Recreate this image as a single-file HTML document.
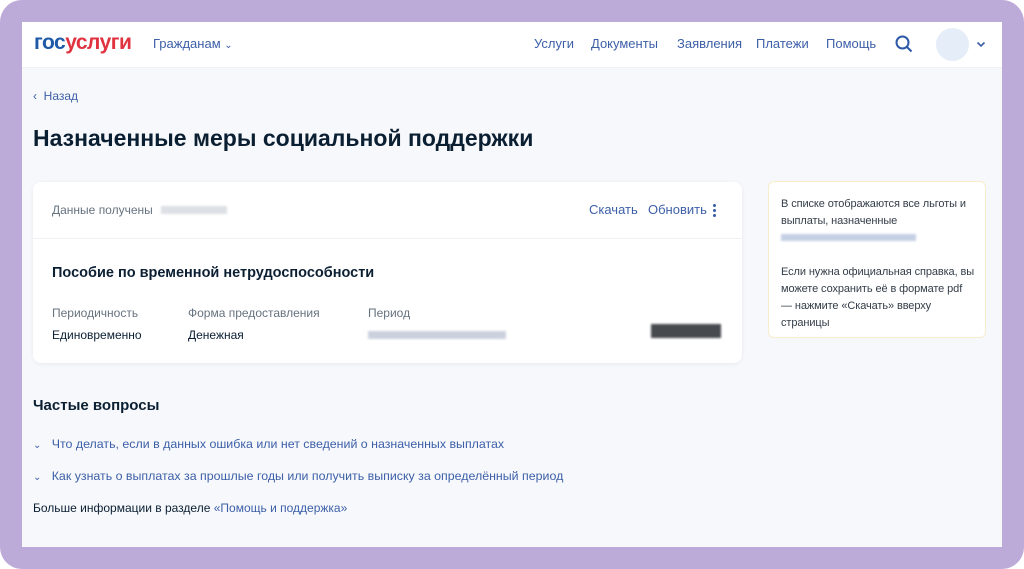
<!DOCTYPE html>
<html><head><meta charset="utf-8"><style>
*{margin:0;padding:0;box-sizing:border-box}
body{width:1024px;height:569px;background:#fff;font-family:"Liberation Sans",sans-serif;position:relative;overflow:hidden}
.frame{position:absolute;left:0;top:0;width:1024px;height:569px;background:#bcaad9;border-radius:22px}
.win{position:absolute;left:22px;top:22px;width:980px;height:525px;background:#f6f8fb;overflow:hidden}
.hdr{height:46px;background:#fff;position:relative;border-bottom:1px solid #eef1f5}
.a{position:absolute;color:#3d5fa8;font-size:13px}
.logo{position:absolute;left:12px;top:9px;font-size:21px;font-weight:bold;letter-spacing:-0.5px}
.card{position:absolute;left:11px;top:160px;width:709px;height:181px;background:#fff;border-radius:8px;box-shadow:0 1px 4px rgba(0,0,0,.06)}
.t{position:absolute;font-size:13px}
.g{color:#66727f}
.k{color:#0b1f33}
.blur{position:absolute;background:#c8ccd6;filter:blur(1px);opacity:.6}
.info{position:absolute;left:746px;top:159px;width:218px;height:157px;background:#fff;border:1px solid #f7eccb;border-radius:6px;padding:14px 12px;font-size:11px;line-height:17px;color:#333d48;white-space:nowrap;letter-spacing:-0.1px}
</style></head><body>
<div class="frame"></div>
<div class="win">
 <div class="hdr">
  <div class="logo"><span style="color:#1e5aa8">гос</span><span style="color:#e0323f">услуги</span></div>
  <div class="a" style="left:131px;top:14px">Гражданам <span style="font-size:10px">&#8964;</span></div>
  <div class="a" style="left:512px;top:14px">Услуги</div>
  <div class="a" style="left:569px;top:14px">Документы</div>
  <div class="a" style="left:655px;top:14px">Заявления</div>
  <div class="a" style="left:734px;top:14px">Платежи</div>
  <div class="a" style="left:804px;top:14px">Помощь</div>
  <svg style="position:absolute;left:873px;top:13px" width="18" height="18" viewBox="0 0 18 18"><circle cx="7.5" cy="7.5" r="6" fill="none" stroke="#2d58a7" stroke-width="2"/><path d="M12 12l4.5 4.5" stroke="#2d58a7" stroke-width="2"/></svg>
  <div style="position:absolute;left:914px;top:6px;width:33px;height:33px;border-radius:50%;background:#e5edf9"></div>
  <svg style="position:absolute;left:954px;top:19px" width="10" height="7" viewBox="0 0 10 7"><path d="M1.5 1.5l3.5 3.5 3.5-3.5" fill="none" stroke="#3d5fa8" stroke-width="1.6"/></svg>
 </div>
 <div class="a" style="left:11px;top:67px;font-size:12px">‹&nbsp; Назад</div>
 <div class="t k" style="left:11px;top:103px;font-size:23px;font-weight:bold">Назначенные меры социальной поддержки</div>
 <div class="card">
  <div class="t g" style="left:19px;top:21px;font-size:12px">Данные получены</div>
  <div class="blur" style="left:128px;top:24px;width:66px;height:8px"></div>
  <div class="a" style="left:556px;top:20px">Скачать</div>
  <div class="a" style="left:615px;top:20px">Обновить</div>
  <div style="position:absolute;left:680px;top:21px;width:3px;height:14px;background:radial-gradient(circle,#3d5fa8 1.4px,transparent 1.6px) 0 0/3px 5px"></div>
  <div style="position:absolute;left:0;top:56px;width:100%;height:1px;background:#eef0f4"></div>
  <div class="t k" style="left:19px;top:83px;font-size:14.5px;font-weight:bold">Пособие по временной нетрудоспособности</div>
  <div class="t g" style="left:19px;top:124px;font-size:12px">Периодичность</div>
  <div class="t g" style="left:155px;top:124px;font-size:12px">Форма предоставления</div>
  <div class="t g" style="left:335px;top:124px;font-size:12px">Период</div>
  <div class="t k" style="left:19px;top:146px;font-size:12px">Единовременно</div>
  <div class="t k" style="left:155px;top:146px;font-size:12px">Денежная</div>
  <div class="blur" style="left:335px;top:149px;width:138px;height:8px;background:#aab2c8"></div>
  <div class="blur" style="left:618px;top:142px;width:70px;height:14px;background:#1a1d24;opacity:.8"></div>
 </div>
 <div class="info">В списке отображаются все льготы и<br>выплаты, назначенные<br><span style="display:inline-block;width:135px;height:7px;background:#c6d0e4;filter:blur(1px)"></span><br><br>Если нужна официальная справка, вы<br>можете сохранить её в формате pdf<br>— нажмите «Скачать» вверху<br>страницы</div>
 <div class="t k" style="left:11px;top:375px;font-size:15px;font-weight:bold">Частые вопросы</div>
 <div class="a" style="left:11px;top:415px;font-size:12.4px"><span style="font-size:10px">&#8964;</span>&nbsp;&nbsp; Что делать, если в данных ошибка или нет сведений о назначенных выплатах</div>
 <div class="a" style="left:11px;top:447px;font-size:12.4px"><span style="font-size:10px">&#8964;</span>&nbsp;&nbsp; Как узнать о выплатах за прошлые годы или получить выписку за определённый период</div>
 <div class="t k" style="left:11px;top:479px;font-size:12px">Больше информации в разделе <span style="color:#3d5fa8">«Помощь и поддержка»</span></div>
</div>
</body></html>
